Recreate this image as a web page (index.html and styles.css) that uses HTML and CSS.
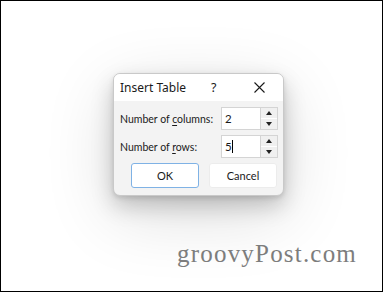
FILE: index.html
```html
<!DOCTYPE html>
<html lang="en">
<head>
    <meta charset="UTF-8">
    <title>Insert Table</title>
    <link rel="stylesheet" href="styles.css">
</head>
<body>
    <div class="frame">
        <div class="dialog">
            <div class="titlebar">
                <span class="title">Insert Table</span>
                <span class="help">?</span>
                <svg class="close" width="11" height="11" viewBox="0 0 11 11">
                    <path d="M0.5 0.5 L10.5 10.5 M10.5 0.5 L0.5 10.5" stroke="#1a1a1a" stroke-width="1.1" fill="none"/>
                </svg>
            </div>
            <div class="dialog-body">
                <div class="field">
                    <span class="label">Number of <u>c</u>olumns:</span>
                    <div class="spin">
                        <div class="spin-input">2</div>
                        <div class="spin-btns">
                            <div class="spin-btn"><svg width="6" height="4" viewBox="0 0 6 4"><path d="M0 4 L3 0 L6 4 Z" fill="#222"/></svg></div>
                            <div class="spin-btn"><svg width="6" height="4" viewBox="0 0 6 4"><path d="M0 0 L3 4 L6 0 Z" fill="#222"/></svg></div>
                        </div>
                    </div>
                </div>
                <div class="field">
                    <span class="label">Number of <u>r</u>ows:</span>
                    <div class="spin">
                        <div class="spin-input">5<span class="caret"></span></div>
                        <div class="spin-btns">
                            <div class="spin-btn"><svg width="6" height="4" viewBox="0 0 6 4"><path d="M0 4 L3 0 L6 4 Z" fill="#222"/></svg></div>
                            <div class="spin-btn"><svg width="6" height="4" viewBox="0 0 6 4"><path d="M0 0 L3 4 L6 0 Z" fill="#222"/></svg></div>
                        </div>
                    </div>
                </div>
                <div class="buttons">
                    <button class="btn btn-default">OK</button>
                    <button class="btn">Cancel</button>
                </div>
            </div>
        </div>
        <div class="watermark">groovyPost.com</div>
    </div>
</body>
</html>
```

FILE: styles.css
```css
html, body {
    margin: 0;
    padding: 0;
    background: #fff;
}

.frame {
    box-sizing: border-box;
    width: 383px;
    height: 292px;
    border: 1px solid #000;
    padding: 72px 0 0 112px;
    overflow: hidden;
    font-family: Lato, "Noto Sans", sans-serif;
    color: #1a1a1a;
}

.dialog {
    width: 171px;
    border: 1px solid #c9c9c9;
    border-radius: 7px;
    overflow: hidden;
    background: #f3f3f3;
    box-sizing: border-box;
    box-shadow: 0 10px 22px rgba(0, 0, 0, 0.2), 0 18px 70px rgba(0, 0, 0, 0.14), 0 2px 5px rgba(0, 0, 0, 0.12);
}

.titlebar {
    height: 27px;
    background: #fff;
    display: flex;
    align-items: center;
    padding: 0 0 0 6px;
    font-family: "Noto Sans", sans-serif;
    font-size: 12px;
}

.title {
    width: 91px;
    white-space: nowrap;
}

.help {
    width: 43px;
    font-size: 12.5px;
}

.close {
    display: block;
}

.dialog-body {
    padding: 6px 5px 7px 6px;
    display: flex;
    flex-direction: column;
    gap: 5px;
    font-size: 10.5px;
}

.field {
    display: flex;
    align-items: center;
    justify-content: space-between;
}

.label {
    white-space: nowrap;
}

.label u {
    text-decoration-thickness: 1px;
    text-underline-offset: 2px;
}

.spin {
    flex-shrink: 0;
    display: flex;
    height: 23px;
    border: 1px solid #d4d4d4;
    box-sizing: border-box;
    width: 57px;
    background: #fff;
}

.spin-input {
    flex: 1;
    display: flex;
    align-items: center;
    padding-left: 3px;
    font-size: 11.5px;
    border-right: 1px solid #d4d4d4;
}

.caret {
    display: inline-block;
    width: 1px;
    height: 13px;
    background: #000;
}

.spin-btns {
    width: 16px;
    display: flex;
    flex-direction: column;
    gap: 1px;
    background: #fff;
}

.spin-btn {
    flex: 1;
    background: #f0f0f0;
    display: flex;
    align-items: center;
    justify-content: center;
}

.buttons {
    display: flex;
    justify-content: flex-end;
    gap: 10px;
    padding: 0 1px 0 0;
}

.btn {
    width: 68px;
    height: 25px;
    margin: 0;
    padding: 0;
    background: #fff;
    border: 1px solid #ececec;
    border-radius: 3px;
    font-family: Lato, "Noto Sans", sans-serif;
    font-size: 11px;
    color: #1a1a1a;
}

.btn-default {
    border-color: #7fb2e5;
}

.watermark {
    margin: 44px 0 0 64px;
    font-family: "Liberation Serif", serif;
    font-size: 25px;
    letter-spacing: 1.2px;
    color: #7d7d7d;
}
```
